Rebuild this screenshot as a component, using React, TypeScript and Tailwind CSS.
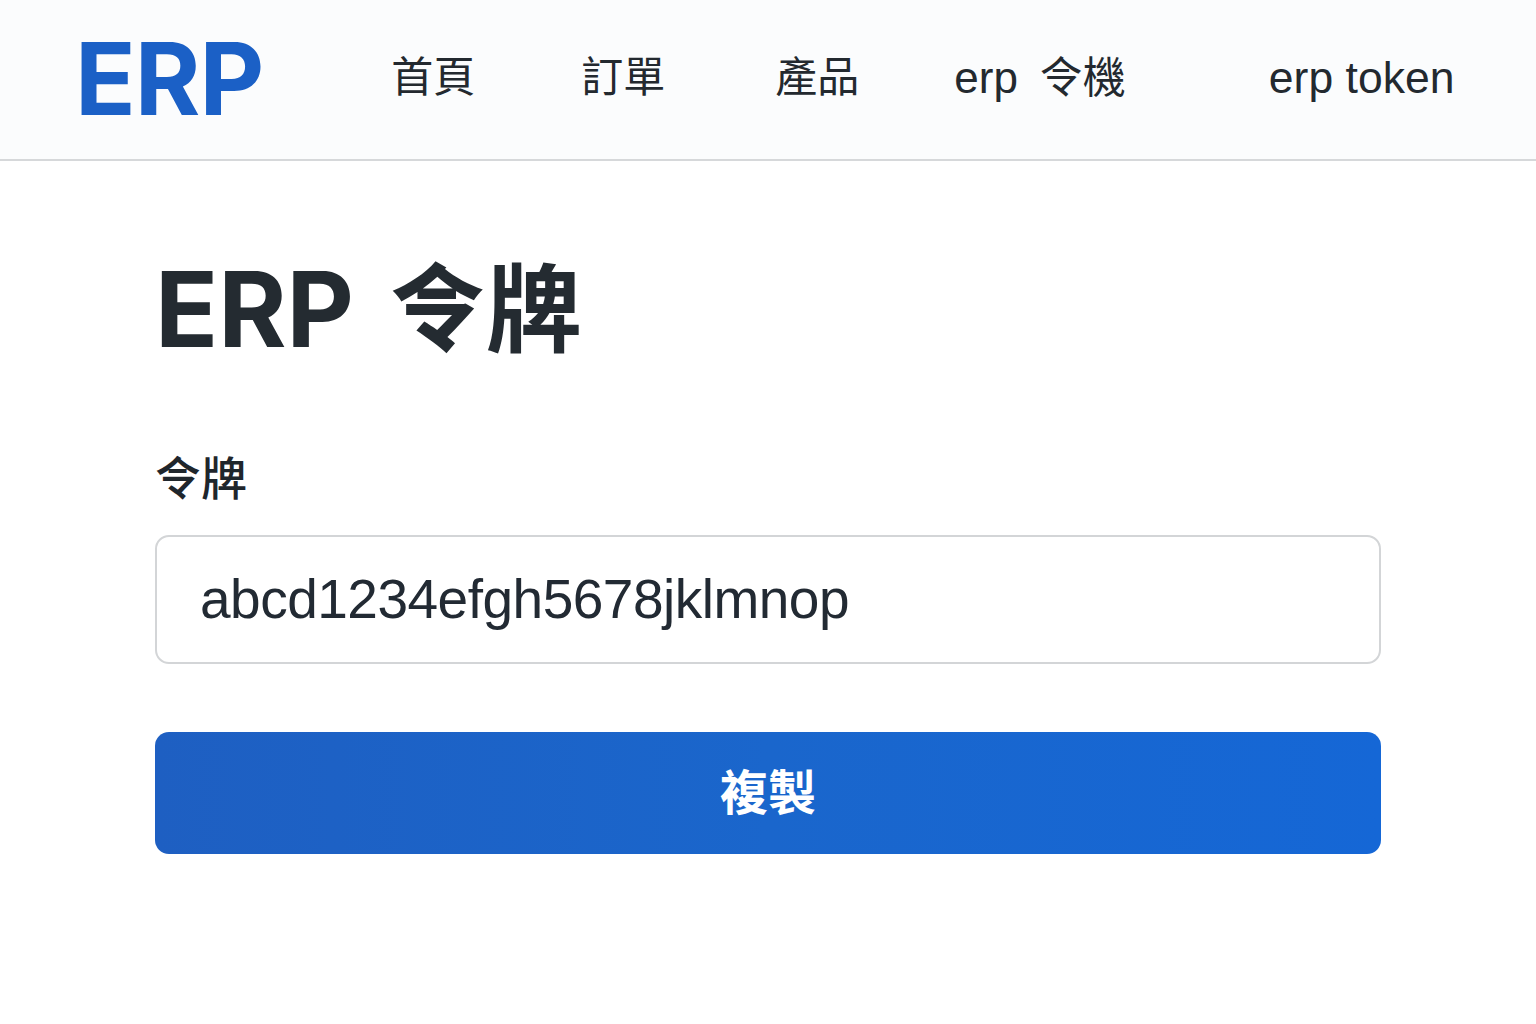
import React from "react";

const cjk = '"Inter", "Noto Sans CJK TC", sans-serif';
const helv = '"Liberation Sans", "Noto Sans CJK TC", sans-serif';

export default function App() {
  return (
    <div className="min-h-[1024px] w-full bg-white" style={{ fontFamily: cjk }}>
      <header className="flex h-[161px] items-center border-b-2 border-[#d6d8da] bg-[#fbfcfd]">
        <div className="ml-[75px] -mt-[2px] text-[100px] font-bold leading-none tracking-[-1px] text-[#1b60c6]">ERP</div>
        <nav className="-mt-[3px] flex items-center text-[42px] leading-none text-[#23292f]" style={{ fontFamily: helv }}>
          <span className="ml-[128px]">首頁</span>
          <span className="ml-[106px]">訂單</span>
          <span className="ml-[110px]">產品</span>
          <span className="ml-[95px] flex items-center">
            <span className="text-[44px]">erp</span>
            <span className="ml-[22px] text-[43px]">令機</span>
          </span>
          <span className="ml-[143px] text-[44.5px]">erp token</span>
        </nav>
      </header>
      <main className="px-[155px] pt-[96px]">
        <h1 className="flex items-center font-bold leading-none text-[#242b31]">
          <span className="text-[104px]">ERP</span>
          <span className="ml-[36px] text-[96px]">令牌</span>
        </h1>
        <div className="mt-[94px] text-[46px] font-medium leading-none text-[#1f262c]">令牌</div>
        <div className="mt-[34px] flex h-[129px] w-[1226px] items-center rounded-[14px] border-2 border-[#d3d5d7] bg-white pl-[43px]">
          <span className="text-[55px] leading-none tracking-[-0.5px] text-[#222a33]" style={{ fontFamily: helv }}>abcd1234efgh5678jklmnop</span>
        </div>
        <button className="mt-[68px] flex h-[122px] w-[1226px] items-center justify-center rounded-[14px] bg-gradient-to-r from-[#1e5fc2] via-[#1a66cc] to-[#1567d6] text-[48px] font-bold text-white">
          複製
        </button>
      </main>
    </div>
  );
}
